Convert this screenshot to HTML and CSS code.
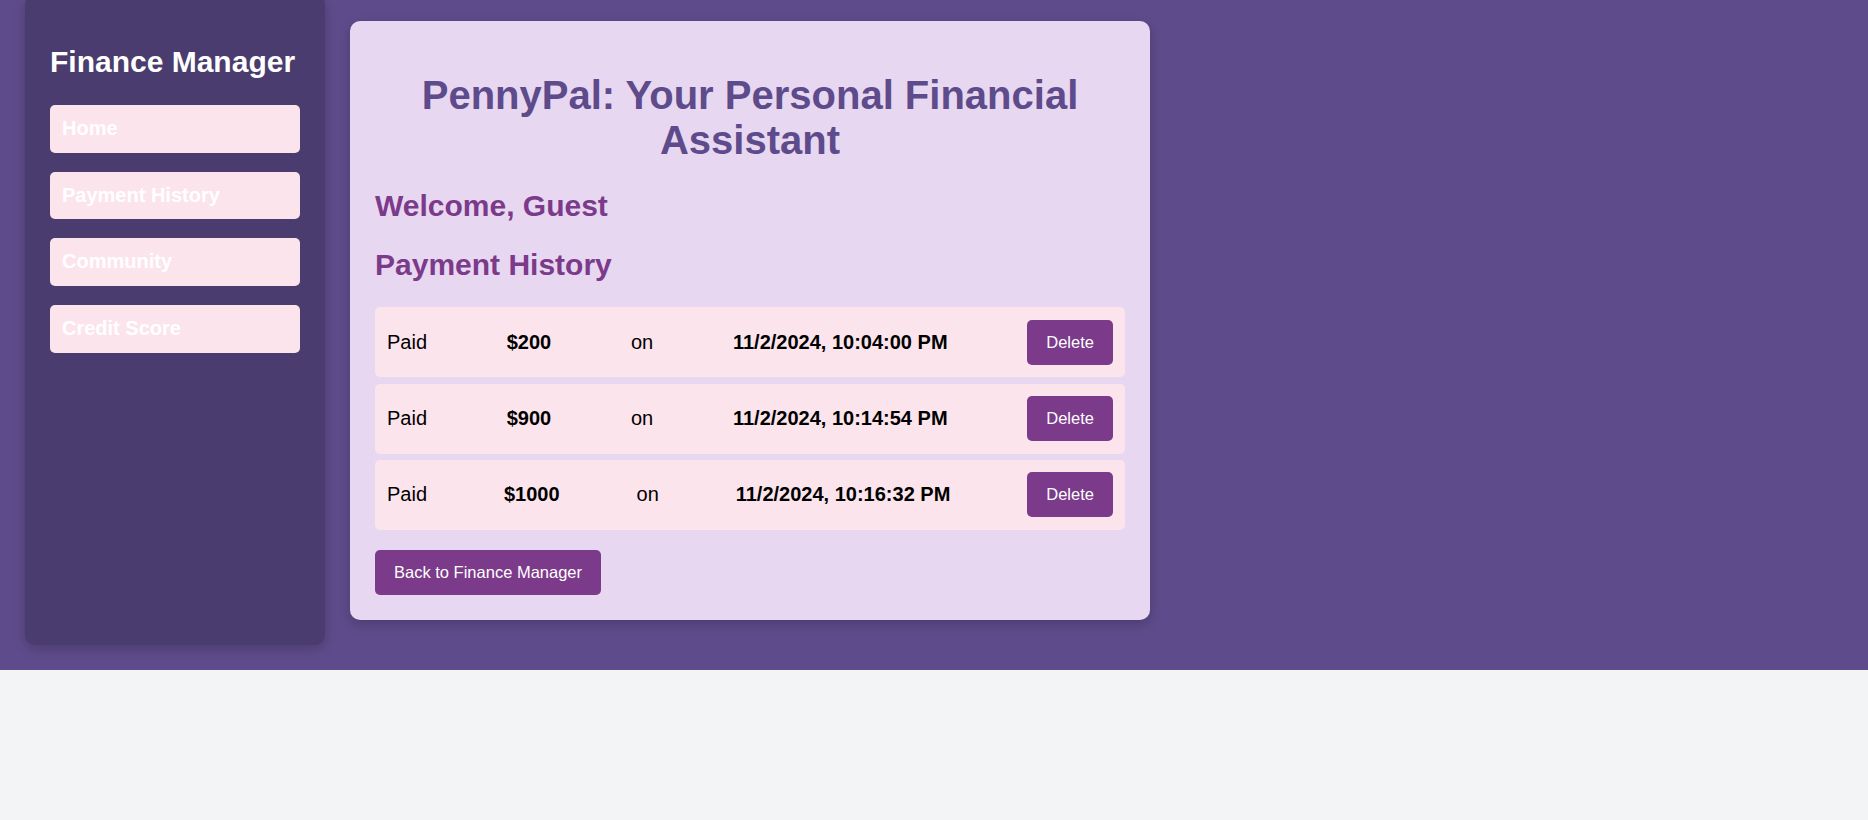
FILE: index.html
```html
<!DOCTYPE html>
<html lang="en">
<head>
<meta charset="utf-8">
<title>PennyPal - Payment History</title>
<link rel="stylesheet" href="styles.css">
</head>
<body>
<div class="layout">
  <aside class="sidebar">
    <h2 class="sidebar-title">Finance Manager</h2>
    <ul class="nav">
      <li><a class="nav-link" href="#">Home</a></li>
      <li><a class="nav-link" href="#">Payment History</a></li>
      <li><a class="nav-link" href="#">Community</a></li>
      <li><a class="nav-link" href="#">Credit Score</a></li>
    </ul>
  </aside>
  <main class="card">
    <h1 class="title">PennyPal: Your Personal Financial Assistant</h1>
    <h2 class="subtitle">Welcome, Guest</h2>
    <h2 class="subtitle">Payment History</h2>
    <div class="payments">
      <div class="payment">
        <span>Paid</span>
        <strong>$200</strong>
        <span>on</span>
        <strong>11/2/2024, 10:04:00 PM</strong>
        <button class="btn">Delete</button>
      </div>
      <div class="payment">
        <span>Paid</span>
        <strong>$900</strong>
        <span>on</span>
        <strong>11/2/2024, 10:14:54 PM</strong>
        <button class="btn">Delete</button>
      </div>
      <div class="payment">
        <span>Paid</span>
        <strong>$1000</strong>
        <span>on</span>
        <strong>11/2/2024, 10:16:32 PM</strong>
        <button class="btn">Delete</button>
      </div>
    </div>
    <button class="btn btn-back">Back to Finance Manager</button>
  </main>
</div>
</body>
</html>
```
FILE: styles.css
```css
html, body {
  margin: 0;
  padding: 0;
}

body {
  background: #f3f4f6;
  font-family: "Liberation Sans", Arial, Helvetica, sans-serif;
}

.layout {
  display: flex;
  align-items: flex-start;
  gap: 25px;
  padding: 0 25px 25px 25px;
  background: #5e4b8b;
}

.sidebar {
  width: 250px;
  min-height: 600px;
  padding: 25px;
  margin-top: -5px;
  background: #4a3c6e;
  border-radius: 10px;
  box-shadow: 0 4px 12px rgba(0, 0, 0, 0.18);
}

.sidebar-title {
  margin: 25.4px 0 25.6px 0;
  font-size: 30px;
  font-weight: bold;
  color: #ffffff;
}

.nav {
  list-style: none;
  margin: 0;
  padding: 0;
}

.nav li {
  margin-bottom: 19px;
}

.nav-link {
  display: block;
  padding: 12px;
  background: #fce4ec;
  color: #ffffff;
  font-size: 20px;
  font-weight: bold;
  line-height: 23.7px;
  text-decoration: none;
  border-radius: 5px;
}

.card {
  width: 750px;
  padding: 25px;
  margin-top: 21px;
  background: #e8d7f1;
  border-radius: 10px;
  box-shadow: 0 4px 12px rgba(0, 0, 0, 0.2);
}

.title {
  margin: 26.8px 0;
  font-size: 40px;
  line-height: 1.12;
  font-weight: bold;
  text-align: center;
  color: #5e4b8b;
}

.subtitle {
  margin: 24.9px 0;
  font-size: 30px;
  line-height: 1.14;
  font-weight: bold;
  color: #7b3a8a;
}

.payments {
  display: flex;
  flex-direction: column;
  gap: 6.6px;
  margin-bottom: 20px;
}

.payment {
  display: flex;
  justify-content: space-between;
  align-items: center;
  padding: 12.4px 12px;
  background: #fce4ec;
  border-radius: 5px;
  font-size: 20px;
  color: #000000;
}

.btn {
  padding: 13px 19px;
  border: none;
  border-radius: 5px;
  background: #7b3a8a;
  color: #ffffff;
  font-family: "Liberation Sans", Arial, Helvetica, sans-serif;
  font-size: 16.5px;
  line-height: normal;
  cursor: pointer;
}

.btn-back {
  display: block;
}
```
